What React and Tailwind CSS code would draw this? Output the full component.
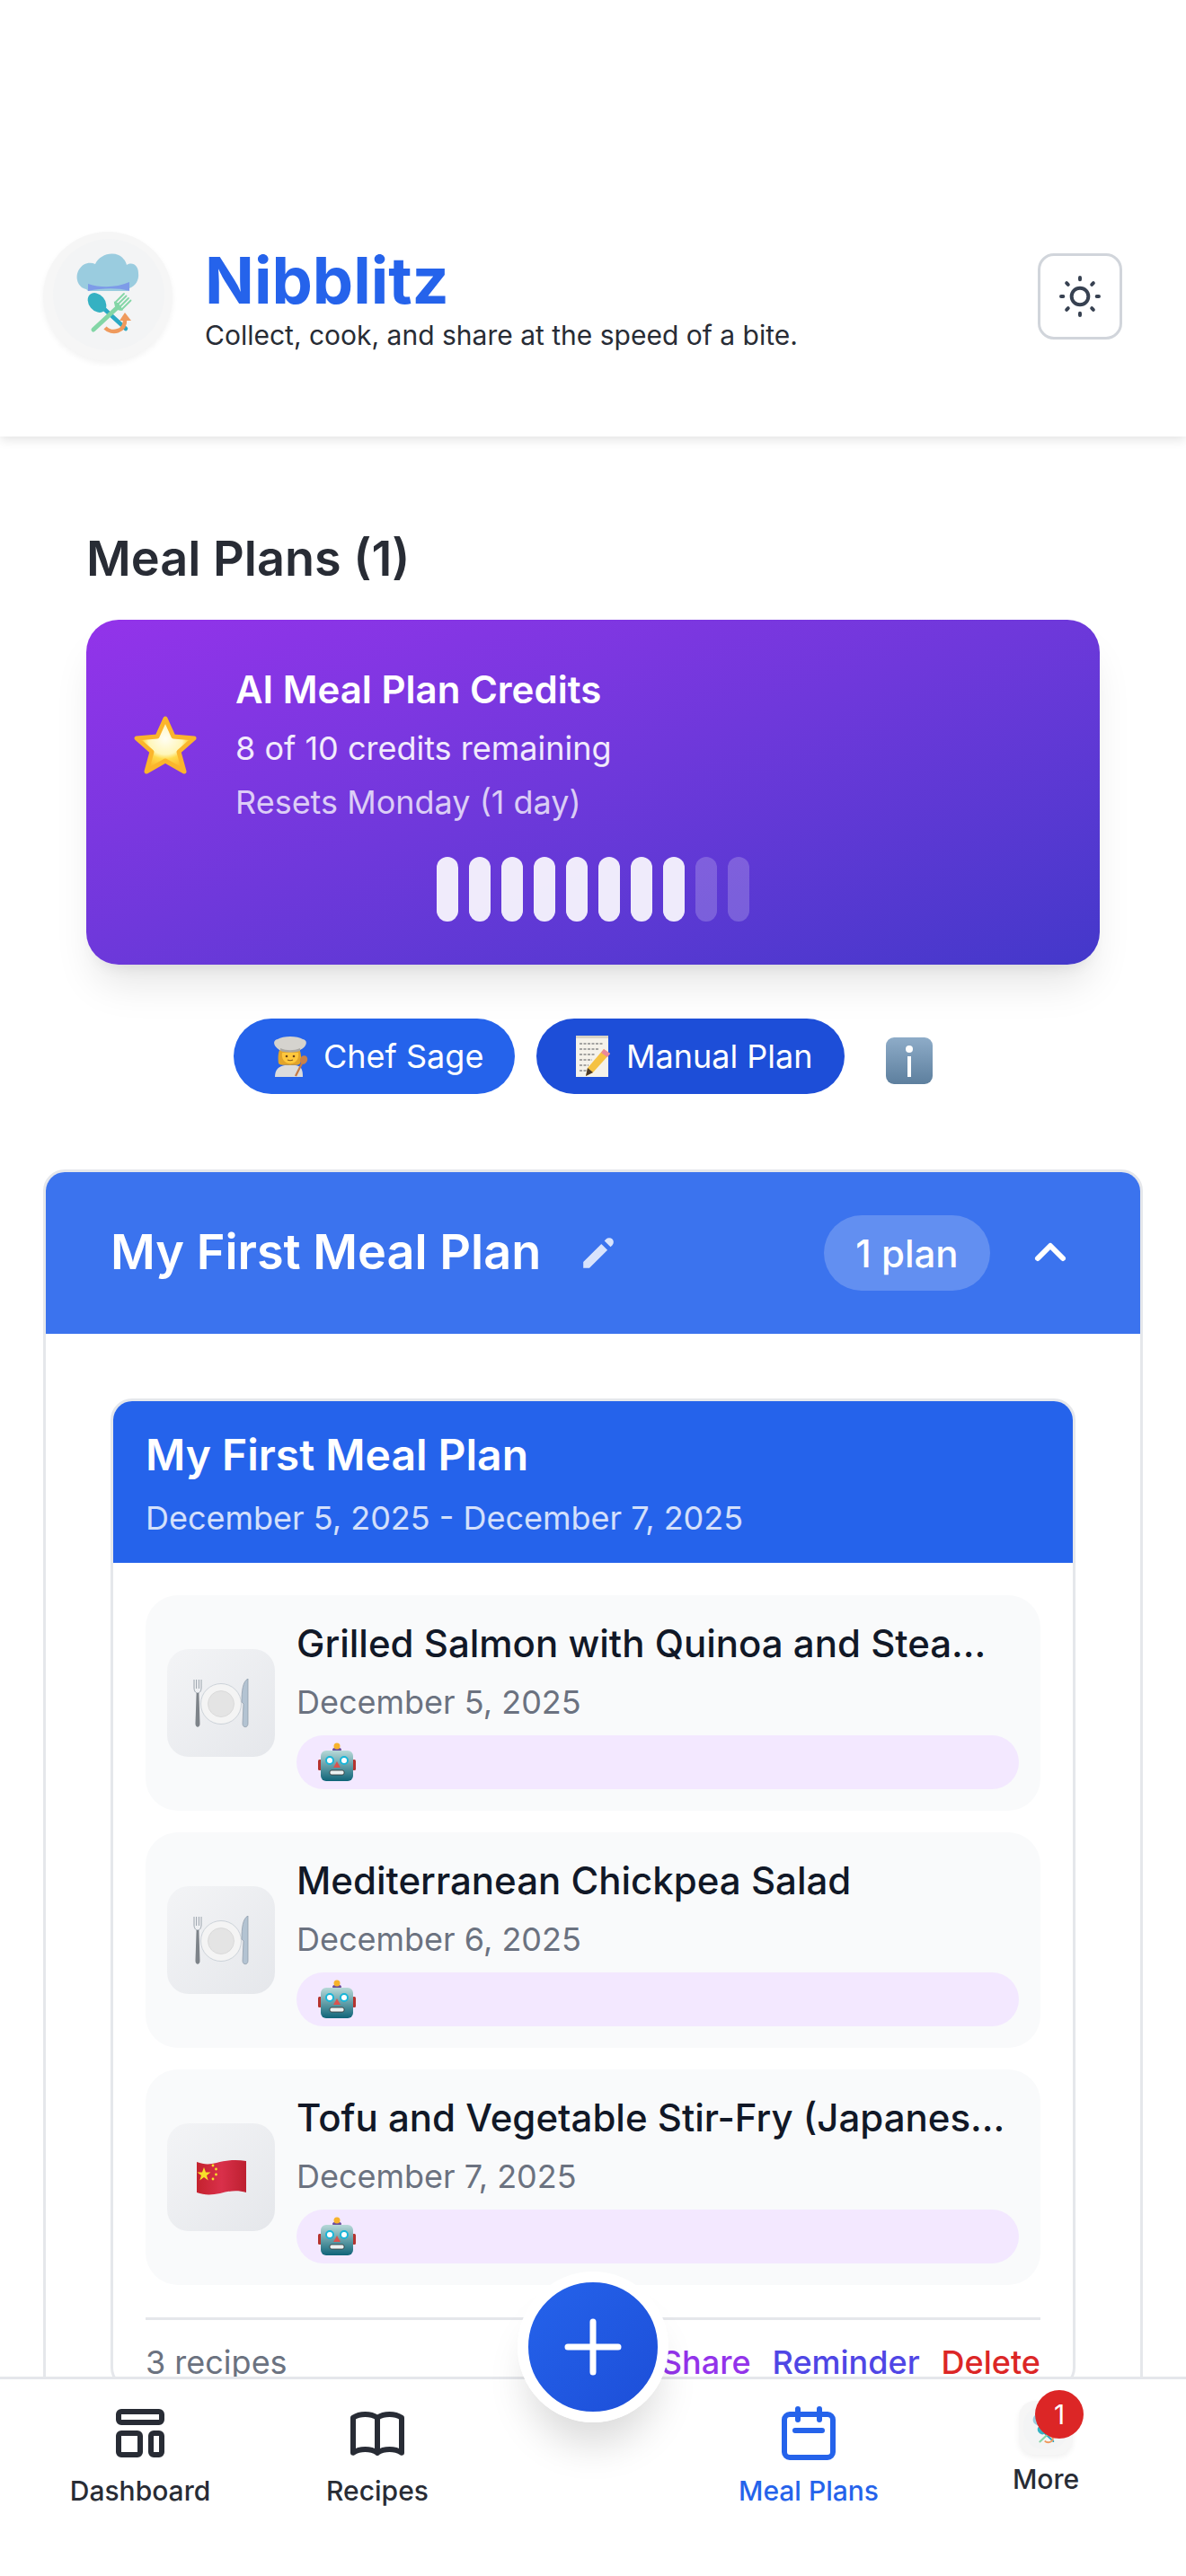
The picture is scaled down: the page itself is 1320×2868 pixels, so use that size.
import { HiOutlineTemplate, HiOutlineBookOpen, HiOutlineCalendar, HiOutlinePlus, HiPencil } from "react-icons/hi";

const Logo = ({ className }) => (
    <svg viewBox="0 0 144 144" className={className}>
        <circle cx="73" cy="70" r="62" fill="#f3f4f5" />
        <path d="M48 64 C38 62 35 50 40 42 C44 35 52 33 58 36 C62 27 74 22 84 26 C88 28 92 32 93 37 C100 33 106 38 106 46 C107 54 103 60 96 63 L94 66 L50 66 Z" fill="#9accdf" />
        <path d="M50 58 C65 63 82 62 96 56 L96 66 C82 62 65 63 50 66 Z" fill="#7d9be8" />
        <path d="M68 86 L92 108" stroke="#2aa8c4" strokeWidth="4.5" strokeLinecap="round" />
        <ellipse cx="60" cy="79" rx="9" ry="12" transform="rotate(-40 60 79)" fill="#35b1c2" />
        <path d="M56 109 L83 84" stroke="#83d6a6" strokeWidth="5" strokeLinecap="round" />
        <path d="M80 79 L90 69 M82.5 81.5 L92.5 71.5 M85 84 L95 74 M87.5 86.5 L97.5 76.5" stroke="#83d6a6" strokeWidth="1.8" strokeLinecap="round" />
        <path d="M80 79 Q81 88 87.5 86.5 L83 80 Z" fill="#83d6a6" stroke="#83d6a6" strokeWidth="2" />
        <path d="M69 107 C76 114 92 112 91 97" fill="none" stroke="#ef9a5d" strokeWidth="4.5" />
        <path d="M85 99 L91 90 L98 99 Z" fill="#ef9a5d" />
    </svg>
);

const StarEmoji = () => (
    <svg viewBox="0 0 72 67" className="w-[72px] h-[67px]">
        <defs>
            <radialGradient id="starFill" cx="50%" cy="38%" r="62%">
                <stop offset="0%" stopColor="#fffef4" />
                <stop offset="48%" stopColor="#fff6b8" />
                <stop offset="62%" stopColor="#ffdb4d" />
                <stop offset="100%" stopColor="#fbb024" />
            </radialGradient>
        </defs>
        <path d="M36 4 L45 24 L68 26 L51 41 L57 63 L36 51 L15 63 L21 41 L4 26 L27 24 Z" fill="url(#starFill)" stroke="#fbb52c" strokeWidth="5" strokeLinejoin="round" />
    </svg>
);

const ChefEmoji = () => (
    <svg viewBox="0 0 40 45" className="w-[40px] h-[45px] shrink-0">
        <path d="M3 45 C3 36 8 33 14 32 L26 32 C32 33 34 36 34 45 Z" fill="#dcdcdc" />
        <path d="M7 30 C6 22 7 16 9 14 L30 14 C32 18 33 24 31 30 C28 33 24 31 20 32 C16 31 10 33 7 30 Z" fill="#e2a42a" />
        <path d="M11 18 L29 18 C30 24 27 30 20 30 C13 30 10 24 11 18 Z" fill="#ffc83d" />
        <circle cx="16" cy="22" r="1.3" fill="#6b4217" />
        <circle cx="24" cy="22" r="1.3" fill="#6b4217" />
        <path d="M17 26 C19 27 21 27 23 26" stroke="#8a5a1c" strokeWidth="1.1" fill="none" />
        <path d="M8 15 C1 11 0 4 6 3 C12 -1 28 -1 34 3 C40 4 39 11 31 15 C24 18 16 18 8 15 Z" fill="#d5d3ce" />
        <path d="M9 13 C16 16 24 16 31 13 L31 16 C24 18 16 18 9 16 Z" fill="#a9a7a2" />
        <path d="M26 44 L34 28" stroke="#c47a45" strokeWidth="2.2" />
        <ellipse cx="35" cy="26" rx="4" ry="5" transform="rotate(25 35 26)" fill="#c8814a" />
    </svg>
);

const MemoEmoji = () => (
    <svg viewBox="0 0 42 48" className="w-[42px] h-[48px] shrink-0">
        <rect x="2" y="1" width="36" height="46" fill="#f5f2ea" />
        <rect x="2" y="1" width="36" height="3" fill="#d8d3c6" />
        <path d="M6 10 H32 M6 16 H28 M6 22 H24 M6 28 H20 M6 34 H16 M6 40 H14" stroke="#8a8a8a" strokeWidth="1.3" strokeDasharray="3 1.5" />
        <path d="M33 16 L40 21 L21 42 L13 46 L15 37 Z" fill="#f5c242" />
        <path d="M33 16 L40 21 L37 25 L30 20 Z" fill="#e9899a" />
        <path d="M15 37 L21 42 L13 46 Z" fill="#4a3a2a" />
    </svg>
);

const InfoEmoji = () => (
    <svg viewBox="0 0 54 54" className="w-[54px] h-[54px]">
        <defs>
            <linearGradient id="infoFill" x1="0" y1="0" x2="0" y2="1">
                <stop offset="0%" stopColor="#8eacc8" />
                <stop offset="100%" stopColor="#5d7f9e" />
            </linearGradient>
        </defs>
        <rect x="1" y="1" width="52" height="52" rx="9" fill="url(#infoFill)" />
        <circle cx="27" cy="14" r="4" fill="#fff" />
        <rect x="25" y="22" width="4" height="23" fill="#fff" />
    </svg>
);

const PlateEmoji = () => (
    <svg viewBox="0 0 63 55" className="w-[63px] h-[55px]">
        <circle cx="31" cy="28" r="22.5" fill="#f4f4f4" stroke="#c3cad2" strokeWidth="0.8" />
        <circle cx="31" cy="28" r="14.5" fill="#e4e4e4" stroke="#d5d5d5" strokeWidth="0.8" />
        <path d="M1 1 V10 C1 14 3 16 5 16 C7 16 9 14 9 10 V1 M3.6 1 V11 M6.4 1 V11" fill="none" stroke="#9aa3ac" strokeWidth="1" />
        <path d="M3.6 16 H6.4 L7.5 50 C7.5 55 2.5 55 2.5 50 Z" fill="#7d8389" />
        <path d="M61 0 C55 3 54 14 54 26 L56 28 L55 50 C55 55 61 55 61 50 Z" fill="#b3c3d2" stroke="#8b98a6" strokeWidth="0.7" />
    </svg>
);

const FlagEmoji = () => (
    <svg viewBox="0 0 55 40" className="w-[55px] h-[40px]">
        <defs>
            <linearGradient id="flagFill" x1="0" y1="0" x2="1" y2="0">
                <stop offset="0%" stopColor="#c4222e" />
                <stop offset="50%" stopColor="#d9304a" />
                <stop offset="100%" stopColor="#bd2030" />
            </linearGradient>
        </defs>
        <path d="M0 3 C8 6 14 6 22 4 C32 1 44 0 55 2 L55 37 C46 34 36 35 26 38 C16 40 8 40 0 37 Z" fill="url(#flagFill)" />
        <path d="M8 9 L10 14.5 L15.5 14.5 L11 18 L12.7 23.5 L8 20 L3.3 23.5 L5 18 L0.5 14.5 L6 14.5 Z" fill="#f7e02a" />
        <circle cx="18" cy="7" r="1.4" fill="#f7e02a" />
        <circle cx="21.5" cy="11" r="1.4" fill="#f7e02a" />
        <circle cx="21.5" cy="17" r="1.4" fill="#f7e02a" />
        <circle cx="18" cy="22" r="1.4" fill="#f7e02a" />
    </svg>
);

const RobotEmoji = () => (
    <svg viewBox="0 0 42 44" className="w-[42px] h-[44px]">
        <defs>
            <linearGradient id="robotFill" x1="0" y1="0" x2="0" y2="1">
                <stop offset="0%" stopColor="#b7d9d8" />
                <stop offset="100%" stopColor="#0f6478" />
            </linearGradient>
        </defs>
        <rect x="0" y="19" width="4" height="12" rx="1.5" fill="#b5342f" />
        <rect x="38" y="19" width="4" height="12" rx="1.5" fill="#b5342f" />
        <ellipse cx="21" cy="8" rx="5" ry="2.5" fill="#6d4f9b" />
        <circle cx="21" cy="4" r="3.5" fill="#f7b32b" />
        <rect x="3" y="9" width="36" height="34" rx="6" fill="url(#robotFill)" />
        <circle cx="13" cy="20" r="4" fill="#fff" stroke="#18b5d8" strokeWidth="2" />
        <circle cx="29" cy="20" r="4" fill="#fff" stroke="#18b5d8" strokeWidth="2" />
        <path d="M21 21 L25 28 L17 28 Z" fill="#d9534f" />
        <rect x="13" y="31" width="16" height="5" rx="2" fill="#eaf2f2" stroke="#333" strokeWidth="0.8" />
    </svg>
);

const recipes = [
    { title: "Grilled Salmon with Quinoa and Stea...", date: "December 5, 2025", thumb: <PlateEmoji /> },
    { title: "Mediterranean Chickpea Salad", date: "December 6, 2025", thumb: <PlateEmoji /> },
    { title: "Tofu and Vegetable Stir-Fry (Japanes...", date: "December 7, 2025", thumb: <FlagEmoji /> },
];

const credits = [true, true, true, true, true, true, true, true, false, false];

const NavItem = ({ icon, label, className }) => (
    <div className={`w-[264px] flex flex-col items-center ${className}`}>
        {icon}
        <span className="text-[30px] leading-[42px] font-medium mt-[7px]">{label}</span>
    </div>
);

export default function App() {
    return (
        <div className="relative h-[2868px] overflow-hidden bg-white text-[#282c35] [font-family:Inter,sans-serif]">
            <header className="relative z-10 bg-white flex items-center h-[486px] pt-[174px] pl-[48px] pr-[71px] shadow-[0_3px_12px_rgba(0,0,0,0.12)]">
                <div className="w-[144px] h-[144px] rounded-full bg-[#f6f6f6] shadow-[0_3px_6px_rgba(0,0,0,0.05)]">
                    <Logo className="w-[144px] h-[144px]" />
                </div>
                <div className="ml-[36px] flex-1">
                    <h1 className="text-[72px] leading-[84px] font-bold text-[#2563eb]">Nibblitz</h1>
                    <p className="text-[30px] leading-[36px] mt-[1px]">Collect, cook, and share at the speed of a bite.</p>
                </div>
                <button className="w-[94px] h-[96px] rounded-[18px] border-[3px] border-[#d1d5db] flex items-center justify-center text-[#374151]">
                    <svg viewBox="0 0 24 24" fill="none" stroke="currentColor" strokeWidth="1.7" strokeLinecap="round" className="w-[56px] h-[56px]">
                        <path d="M12 3v1m0 16v1m9-9h-1M4 12H3m15.364 6.364l-.707-.707M6.343 6.343l-.707-.707m12.728 0l-.707.707M6.343 17.657l-.707.707M16 12a4 4 0 11-8 0 4 4 0 018 0z" />
                    </svg>
                </button>
            </header>

            <main className="px-[48px]">
                <div className="px-[48px]">
                    <h2 className="text-[54px] leading-[72px] font-semibold mt-[100px]">Meal Plans (1)</h2>
                    <div className="mt-[32px] rounded-[36px] p-[48px] text-white bg-gradient-to-br from-[#9333ea] to-[#4338ca] shadow-[0_30px_45px_-9px_rgba(0,0,0,0.1),0_12px_18px_-12px_rgba(0,0,0,0.1)]">
                        <div className="flex items-center">
                            <div className="w-[80px] flex justify-center mr-[38px]">
                                <StarEmoji />
                            </div>
                            <div>
                                <div className="text-[42px] leading-[60px] font-semibold">AI Meal Plan Credits</div>
                                <div className="text-[36px] leading-[54px] mt-[8px] text-white/90">8 of 10 credits remaining</div>
                                <div className="text-[36px] leading-[54px] mt-[6px] text-white/75">Resets Monday (1 day)</div>
                            </div>
                        </div>
                        <div className="flex justify-center gap-[12px] mt-[34px]">
                            {credits.map((on, i) => (
                                <div key={i} className={`w-[24px] h-[72px] rounded-full ${on ? "bg-white/90" : "bg-white/20"}`} />
                            ))}
                        </div>
                    </div>
                    <div className="flex justify-center gap-[24px] mt-[60px] text-white text-[36px]">
                        <button className="h-[84px] w-[313px] rounded-full bg-[#2563eb] flex items-center pl-[43px]">
                            <ChefEmoji />
                            <span className="ml-[17px]">Chef Sage</span>
                        </button>
                        <button className="h-[84px] w-[343px] rounded-full bg-[#1d4ed8] flex items-center pl-[42px]">
                            <MemoEmoji />
                            <span className="ml-[16px]">Manual Plan</span>
                        </button>
                        <button className="h-[84px] w-[96px] flex items-center justify-center pt-[10px]">
                            <InfoEmoji />
                        </button>
                    </div>
                </div>

                <section className="mt-[84px] rounded-[24px] border-[3px] border-[#e5e7eb] overflow-hidden">
                    <div className="h-[180px] bg-[#3b73ee] text-white flex items-center pl-[72px] pr-[76px]">
                        <h3 className="text-[54px] font-semibold -mt-[3px]">My First Meal Plan</h3>
                        <HiPencil className="w-[48px] h-[48px] ml-[40px] text-white/80" />
                        <div className="ml-auto h-[84px] w-[185px] rounded-full bg-white/20 flex items-center justify-center text-[42px] font-medium">1 plan</div>
                        <svg viewBox="0 0 24 24" fill="none" stroke="currentColor" strokeWidth="3" strokeLinecap="round" strokeLinejoin="round" className="w-[48px] h-[48px] ml-[43px]">
                            <path d="M5 15l7-7 7 7" />
                        </svg>
                    </div>
                    <div className="p-[72px]">
                        <div className="rounded-[24px] border-[3px] border-[#e5e7eb] overflow-hidden">
                            <div className="h-[180px] bg-[#2563eb] text-white px-[36px] pt-[27px]">
                                <div className="text-[48px] leading-[66px] font-semibold">My First Meal Plan</div>
                                <div className="text-[36px] leading-[54px] mt-[10px] text-white/80">December 5, 2025 - December 7, 2025</div>
                            </div>
                            <div className="px-[36px] pt-[36px]">
                                <div className="flex flex-col gap-[24px]">
                                    {recipes.map((r) => (
                                        <div key={r.date} className="flex items-center gap-[24px] p-[24px] rounded-[36px] bg-[#f9fafb]">
                                            <div className="w-[120px] h-[120px] shrink-0 rounded-[24px] bg-gradient-to-br from-[#f3f4f6] to-[#e5e7eb] flex items-center justify-center">
                                                {r.thumb}
                                            </div>
                                            <div className="flex-1">
                                                <div className="text-[42px] leading-[60px] font-medium text-[#111827] whitespace-nowrap">{r.title}</div>
                                                <div className="text-[36px] leading-[54px] mt-[8px] text-[#6b7280]">{r.date}</div>
                                                <div className="h-[60px] mt-[10px] rounded-full bg-[#f3e8ff] flex items-center pl-[24px]">
                                                    <RobotEmoji />
                                                </div>
                                            </div>
                                        </div>
                                    ))}
                                </div>
                                <div className="mt-[36px] border-t-[3px] border-[#e5e7eb] pt-[20px] flex items-center justify-between text-[36px] leading-[54px]">
                                    <span className="text-[#6b7280]">3 recipes</span>
                                    <div className="flex gap-[24px] font-medium">
                                        <span className="text-[#9333ea]">Share</span>
                                        <span className="text-[#4f46e5]">Reminder</span>
                                        <span className="text-[#dc2626]">Delete</span>
                                    </div>
                                </div>
                            </div>
                        </div>
                    </div>
                </section>
            </main>

            <nav className="absolute z-20 left-0 right-0 bottom-0 h-[222px] bg-white border-t-[3px] border-[#e5e7eb] flex px-[24px] pt-[24px]">
                <NavItem label="Dashboard" icon={<HiOutlineTemplate className="w-[72px] h-[72px]" />} />
                <NavItem label="Recipes" icon={<HiOutlineBookOpen className="w-[72px] h-[72px]" />} />
                <div className="w-[216px]" />
                <NavItem label="Meal Plans" className="text-[#2563eb]" icon={<HiOutlineCalendar className="w-[72px] h-[72px]" />} />
                <div className="w-[264px] flex flex-col items-center">
                    <div className="w-[60px] h-[60px] rounded-[18px] bg-[#f6f6f6] shadow-[0_3px_6px_rgba(0,0,0,0.06)]">
                        <Logo className="w-[60px] h-[60px]" />
                    </div>
                    <span className="text-[30px] leading-[42px] font-medium mt-[6px]">More</span>
                </div>
            </nav>
            <div className="absolute z-30 left-[1152px] top-[2661px] w-[54px] h-[54px] rounded-full bg-[#dc2626] text-white text-[30px] flex items-center justify-center">1</div>
            <button className="absolute z-30 left-[576px] top-[2529px] w-[168px] h-[168px] rounded-full border-[12px] border-white bg-gradient-to-br from-[#2563eb] to-[#1d4ed8] text-white flex items-center justify-center shadow-[0_36px_45px_-12px_rgba(0,0,0,0.15)]">
                <HiOutlinePlus className="w-[84px] h-[84px]" />
            </button>
        </div>
    );
}
